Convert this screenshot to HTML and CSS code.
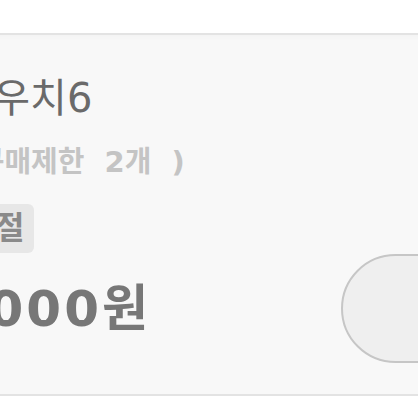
FILE: index.html
```html
<!DOCTYPE html>
<html lang="ko">
<head>
    <meta charset="UTF-8">
    <meta name="viewport" content="width=device-width, initial-scale=1.0">
    <title>상품 카드</title>
    <link rel="stylesheet" href="styles.css">
</head>
<body>
    <div class="product-card">
        <h2 class="product-name">새 파우치6</h2>
        <p class="buy-limit">(최대 구매제한 2개 )</p>

        <div class="tag-row">
            <span class="tag">신</span>
            <span class="tag">품절</span>
        </div>

        <div class="price-row">
            <span class="price">15,000원</span>
            <!-- 품절 상태라 비활성 버튼 -->
            <button class="buy-btn" disabled></button>
        </div>
    </div>
</body>
</html>
```

FILE: styles.css
```css
:root {
    --card-bg: #f8f8f8;
    --line: #e3e3e3;
    --text: #6a6a6a;
    --muted: #c4c4c4;
}

body {
    margin: 0;
    background: #fff;
    overflow: hidden;
    font-family: "DejaVu Sans", "Noto Sans CJK KR", sans-serif;
}

.product-card {
    width: 590px;
    margin: 33px 0 0 -109px;
    padding: 43px 0 31px;
    background: var(--card-bg);
    border-top: 2px solid var(--line);
    border-bottom: 2px solid var(--line);
    box-shadow: inset 0 3px 4px rgba(0, 0, 0, 0.02);
}

.product-name {
    margin: 0;
    font-size: 40px;
    line-height: 40px;
    font-weight: 400;
    word-spacing: 16px;
    color: var(--text);
    white-space: nowrap;
}

.buy-limit {
    margin: 28px 0 0;
    font-size: 29px;
    line-height: 32px;
    font-weight: 700;
    word-spacing: 10px;
    color: var(--muted);
    white-space: nowrap;
}

.tag-row {
    display: flex;
    gap: 15px;
    margin-top: 26px;
}

.tag {
    padding: 8px 10px;
    font-size: 32px;
    line-height: 33px;
    font-weight: 700;
    color: #8a8a8a;
    background: #e7e7e7;
    border-radius: 6px;
}

.price-row {
    display: flex;
    align-items: center;
    justify-content: space-between;
    margin-top: 1px;
}

.price {
    font-size: 50px;
    line-height: 56px;
    font-weight: 700;
    letter-spacing: 3px;
    color: #777;
    white-space: nowrap;
}

.buy-btn {
    width: 140px;
    height: 109px;
    padding: 0;
    background: #efefef;
    border: 2px solid #c6c6c6;
    border-radius: 55px;
}
```
